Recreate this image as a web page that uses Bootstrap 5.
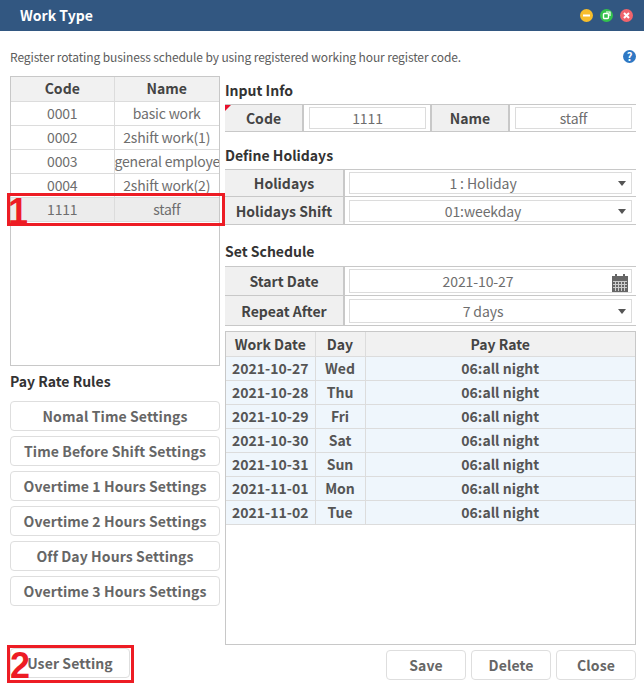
<!DOCTYPE html>
<html lang="en">
<head>
  <meta charset="UTF-8">
  <meta name="viewport" content="width=device-width, initial-scale=1.0">
  <title>Work Type</title>
  <link href="https://cdn.jsdelivr.net/npm/bootstrap@5.3.0/dist/css/bootstrap.min.css" rel="stylesheet">
  <style>
    html, body {
      height: 688px;
      overflow: hidden;
    }
    body {
      position: relative;
      background-color: #fff;
      font-family: "Noto Sans CJK KR", "Noto Sans", sans-serif;
      font-size: 14px;
      color: #666;
    }
    .title-bar {
      height: 31px;
      background-color: #325781;
      padding: 0 11px 0 20px;
    }
    .title-bar h1 {
      font-size: 14px;
      font-weight: 700;
      color: #fff;
      margin: 0;
    }
    .win-btns {
      gap: 7px;
    }
    .win-btn {
      width: 13px;
      height: 13px;
      border-radius: 50%;
    }
    .win-btn svg {
      display: block;
    }
    .intro {
      height: 45px;
      padding: 17px 8px 0 10px;
      font-size: 12px;
      line-height: 18px;
      letter-spacing: -0.11px;
      color: #5c5c5c;
    }
    .help-dot {
      width: 13px;
      height: 13px;
      margin-top: 2px;
      border-radius: 50%;
      background-color: #2f78c4;
      color: #fff;
      font-size: 11px;
      font-weight: 700;
      line-height: 13px;
      letter-spacing: 0;
      text-align: center;
    }
    .work-area {
      padding: 0 8px 0 10px;
      height: 574px;
    }
    .left-col {
      width: 210px;
      margin-right: 5px;
    }
    .right-col {
      width: 411px;
    }
    .code-box {
      height: 290px;
      border: 1px solid #c8c8c8;
      overflow: hidden;
    }
    .grid-tbl {
      margin: 0;
      table-layout: fixed;
      width: 100%;
      font-size: 14px;
      line-height: 23px;
    }
    .grid-tbl th, .grid-tbl td {
      padding: 0;
      height: 24px;
      text-align: center;
      white-space: nowrap;
      overflow: hidden;
      border: 1px solid #dcdcdc;
      border-top: 0;
      border-left: 0;
      color: #6e6e6e;
      letter-spacing: -0.2px;
    }
    .grid-tbl tr > :last-child {
      border-right: 0;
    }
    .grid-tbl th {
      background-color: #f1f1f1;
      color: #444;
      font-weight: 700;
      letter-spacing: 0;
    }
    .grid-tbl .picked td {
      background-color: #ececec;
    }
    .col-code {
      width: 103px;
    }
    .section-title {
      font-size: 14px;
      font-weight: 700;
      line-height: 20px;
      color: #333;
      margin: 0;
    }
    .rules-title {
      margin-top: 5px;
      margin-bottom: 10px;
    }
    .in-first {
      margin-top: 4px;
      margin-bottom: 4px;
    }
    .in-next {
      margin-top: 13px;
      margin-bottom: 4px;
    }
    .in-last {
      margin-top: 16px;
      margin-bottom: 5px;
    }
    .rule-btn {
      display: block;
      width: 100%;
      height: 30px;
      padding: 0;
      margin-bottom: 5px;
      background-color: #fff;
      border: 1px solid #dedede;
      border-radius: 4px;
      font-size: 14px;
      font-weight: 700;
      line-height: 26px;
      letter-spacing: 0.1px;
      color: #666;
      white-space: nowrap;
    }
    .rule-btn:hover {
      background-color: #f5f5f5;
      border-color: #dedede;
      color: #666;
    }
    .user-set {
      width: 120px;
      margin-top: 42px;
    }
    .foot-row {
      gap: 5px;
      margin-top: 5px;
    }
    .foot-btn {
      width: 80px;
      margin: 0;
    }
    .form-band {
      border-top: 1px solid #c8c8c8;
      border-bottom: 1px solid #c8c8c8;
    }
    .form-band + .form-band {
      border-top: 0;
    }
    .band-a, .band-b {
      height: 28px;
    }
    .band-c {
      height: 30px;
    }
    .field-label {
      position: relative;
      flex: none;
      height: 100%;
      background-color: #f0f0f0;
      border-right: 2px solid #c8c8c8;
      font-weight: 700;
      color: #444;
      text-align: center;
      line-height: 26px;
    }
    .field-label.second {
      border-left: 2px solid #c8c8c8;
    }
    .must::before {
      content: "";
      position: absolute;
      left: 0;
      top: 0;
      border-top: 6px solid #e8112d;
      border-right: 6px solid transparent;
    }
    .field-value {
      position: relative;
      flex: none;
      height: 22px;
      background-color: #fff;
      border: 1px solid #dcdcdc;
      color: #6e6e6e;
      text-align: center;
      line-height: 20px;
      letter-spacing: -0.1px;
    }
    .lab-code {
      width: 79px;
    }
    .lab-name {
      width: 80px;
    }
    .val-code {
      width: 117px;
      margin: 0 4px 0 5px;
    }
    .val-name {
      width: 117px;
      margin-left: 5px;
    }
    .lab-wide {
      width: 120px;
    }
    .val-wide {
      width: 283px;
      margin-left: 4px;
      padding-right: 15px;
    }
    .band-b + .band-b .lab-wide {
      line-height: 28px;
    }
    .band-c .lab-wide {
      line-height: 28px;
    }
    .band-c + .band-c .lab-wide {
      line-height: 30px;
    }
    .band-c .val-wide {
      height: 24px;
      line-height: 22px;
    }
    .band-c .val-date {
      padding-right: 25px;
    }
    .caret-down {
      position: absolute;
      right: 5px;
      top: 50%;
      margin-top: -2px;
      border-top: 5px solid #555;
      border-left: 4px solid transparent;
      border-right: 4px solid transparent;
    }
    .cal-icon {
      position: absolute;
      right: 3px;
      top: 4px;
    }
    .sched-box {
      height: 314px;
      margin-top: 5px;
      border: 1px solid #c8c8c8;
      overflow: hidden;
    }
    .sched-box th {
      padding-top: 2px;
      line-height: 21px;
    }
    .sched-box td {
      padding-bottom: 1px;
      line-height: 22px;
      background-color: #eff6fc;
      font-weight: 700;
      color: #555;
      letter-spacing: 0;
    }
    .col-date {
      width: 89px;
    }
    .col-day {
      width: 50px;
    }
    .mark-box {
      position: absolute;
      border: 3px solid #ed1c24;
      pointer-events: none;
    }
    .mark-num {
      position: absolute;
      color: #ed1c24;
      font-family: "Liberation Sans", sans-serif;
      font-size: 36px;
      font-weight: 700;
      line-height: 36px;
    }
  </style>
</head>
<body>

  <div class="title-bar d-flex align-items-center justify-content-between">
    <h1>Work Type</h1>
    <div class="d-flex win-btns">
      <span class="win-btn" style="background-color:#f7bd2b">
        <svg width="13" height="13" viewBox="0 0 13 13"><rect x="3" y="5.5" width="7" height="2" fill="#fff"/></svg>
      </span>
      <span class="win-btn" style="background-color:#33c24d">
        <svg width="13" height="13" viewBox="0 0 13 13"><rect x="3.5" y="4.5" width="5" height="5" rx="1" fill="none" stroke="#fff" stroke-width="1.4"/><path d="M6 3h4v4" fill="none" stroke="#fff" stroke-width="1.2"/></svg>
      </span>
      <span class="win-btn" style="background-color:#f0646c">
        <svg width="13" height="13" viewBox="0 0 13 13"><path d="M4 4l5 5M9 4l-5 5" stroke="#fff" stroke-width="2"/></svg>
      </span>
    </div>
  </div>

  <div class="intro d-flex justify-content-between">
    <span>Register rotating business schedule by using registered working hour register code.</span>
    <span class="help-dot">?</span>
  </div>

  <div class="work-area d-flex">
    <div class="left-col">
      <div class="code-box">
        <table class="grid-tbl">
          <colgroup><col class="col-code"><col></colgroup>
          <thead>
            <tr><th>Code</th><th>Name</th></tr>
          </thead>
          <tbody id="codeRows"></tbody>
        </table>
      </div>
      <h2 class="section-title rules-title">Pay Rate Rules</h2>
      <button class="btn rule-btn">Nomal Time Settings</button>
      <button class="btn rule-btn">Time Before Shift Settings</button>
      <button class="btn rule-btn">Overtime 1 Hours Settings</button>
      <button class="btn rule-btn">Overtime 2 Hours Settings</button>
      <button class="btn rule-btn">Off Day Hours Settings</button>
      <button class="btn rule-btn">Overtime 3 Hours Settings</button>
      <button class="btn rule-btn user-set">User Setting</button>
    </div>

    <div class="right-col">
      <h2 class="section-title in-first">Input Info</h2>
      <div class="form-band d-flex align-items-center band-a">
        <div class="field-label must lab-code">Code</div>
        <div class="field-value val-code">1111</div>
        <div class="field-label second lab-name">Name</div>
        <div class="field-value val-name">staff</div>
      </div>

      <h2 class="section-title in-next">Define Holidays</h2>
      <div class="form-band d-flex align-items-center band-b">
        <div class="field-label lab-wide">Holidays</div>
        <div class="field-value val-wide">1 : Holiday<span class="caret-down"></span></div>
      </div>
      <div class="form-band d-flex align-items-center band-b">
        <div class="field-label lab-wide">Holidays Shift</div>
        <div class="field-value val-wide">01:weekday<span class="caret-down"></span></div>
      </div>

      <h2 class="section-title in-last">Set Schedule</h2>
      <div class="form-band d-flex align-items-center band-c">
        <div class="field-label lab-wide">Start Date</div>
        <div class="field-value val-wide val-date">2021-10-27
          <svg class="cal-icon" width="16" height="18" viewBox="0 0 16 18">
            <rect x="3" y="0" width="2" height="3" fill="#666"/>
            <rect x="11" y="0" width="2" height="3" fill="#666"/>
            <rect x="0" y="2" width="16" height="16" fill="#666"/>
            <path d="M1 7.5h14M1 10.5h14M1 13.5h14M3.5 7v10M6.5 7v10M9.5 7v10M12.5 7v10" stroke="#ccc" stroke-width="1"/>
          </svg>
        </div>
      </div>
      <div class="form-band d-flex align-items-center band-c">
        <div class="field-label lab-wide">Repeat After</div>
        <div class="field-value val-wide">7 days<span class="caret-down"></span></div>
      </div>

      <div class="sched-box">
        <table class="grid-tbl">
          <colgroup><col class="col-date"><col class="col-day"><col></colgroup>
          <thead>
            <tr><th>Work Date</th><th>Day</th><th>Pay Rate</th></tr>
          </thead>
          <tbody id="schedRows"></tbody>
        </table>
      </div>

      <div class="d-flex justify-content-end foot-row">
        <button class="btn rule-btn foot-btn">Save</button>
        <button class="btn rule-btn foot-btn">Delete</button>
        <button class="btn rule-btn foot-btn">Close</button>
      </div>
    </div>
  </div>

  <div class="mark-box" style="left:7px;top:193px;width:218px;height:33px"></div>
  <div class="mark-num" style="left:8px;top:194px">1</div>
  <div class="mark-box" style="left:7px;top:645px;width:127px;height:38px"></div>
  <div class="mark-num" style="left:10px;top:648px">2</div>

  <script>
    const codigos = [
      ['0001', 'basic work'],
      ['0002', '2shift work(1)'],
      ['0003', 'general employee'],
      ['0004', '2shift work(2)'],
      ['1111', 'staff']
    ];
    const dias = [
      ['2021-10-27', 'Wed'], ['2021-10-28', 'Thu'], ['2021-10-29', 'Fri'], ['2021-10-30', 'Sat'],
      ['2021-10-31', 'Sun'], ['2021-11-01', 'Mon'], ['2021-11-02', 'Tue']
    ];
    const tablaCodigos = document.getElementById('codeRows');
    codigos.forEach(c => {
      const fila = document.createElement('tr');
      if (c[0] === '1111') fila.className = 'picked';
      fila.innerHTML = `<td>${c[0]}</td><td>${c[1]}</td>`;
      tablaCodigos.appendChild(fila);
    });
    const tablaDias = document.getElementById('schedRows');
    dias.forEach(d => {
      const fila = document.createElement('tr');
      fila.innerHTML = `<td>${d[0]}</td><td>${d[1]}</td><td>06:all night</td>`;
      tablaDias.appendChild(fila);
    });
  </script>
  <script src="https://cdn.jsdelivr.net/npm/bootstrap@5.3.0/dist/js/bootstrap.bundle.min.js"></script>
</body>
</html>
